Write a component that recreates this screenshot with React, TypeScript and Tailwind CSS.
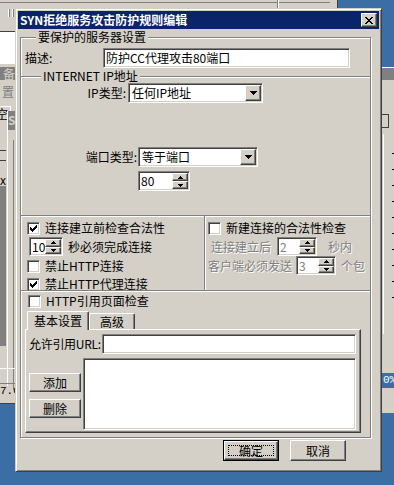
const sunken =
  'border border-t-[#808080] border-l-[#808080] border-b-white border-r-white shadow-[inset_1px_1px_0_#404040,inset_-1px_-1px_0_#d4d0c8] p-[1px]'
const raised =
  'border border-t-white border-l-white border-b-[#404040] border-r-[#404040] shadow-[inset_-1px_-1px_0_#808080,inset_1px_1px_0_#d4d0c8]'
const etchedTop = 'border-t border-[#808080] shadow-[inset_0_1px_0_#fff]'
const dim = 'text-[#808080] [text-shadow:1px_1px_0_#fff]'

const TICKS = [152, 168, 184, 200, 216, 232, 248, 264, 280, 296]

function CheckMark() {
  // classic 7x7 pixel tick
  const cols = [2, 3, 4, 3, 2, 1, 0]
  return (
    <svg width="7" height="7" viewBox="0 0 7 7" shapeRendering="crispEdges">
      {cols.map((y, x) => (
        <rect key={x} x={x} y={y} width="1" height="3" fill="#000" />
      ))}
    </svg>
  )
}

function Check({ on, label }: { on?: boolean; label: string }) {
  return (
    <div className="flex items-center">
      <div className={`${sunken} flex h-[13px] w-[13px] items-center justify-center bg-white p-0`}>
        {on && <CheckMark />}
      </div>
      <span className="ml-[5px]">{label}</span>
    </div>
  )
}

function Arrow({ up, w = 7 }: { up?: boolean; w?: number }) {
  const h = Math.ceil(w / 2)
  return (
    <svg width={w} height={h} viewBox={`0 0 ${w} ${h}`} shapeRendering="crispEdges">
      <polygon points={up ? `${w / 2},0 ${w},${h} 0,${h}` : `0,0 ${w},0 ${w / 2},${h}`} fill="#000" />
    </svg>
  )
}

function Spin({ value, className, disabled }: { value: string; className: string; disabled?: boolean }) {
  return (
    <div className={`${sunken} flex bg-white ${className}`}>
      <span className={`flex-1 pl-[1px] leading-[15px] ${disabled ? 'text-[#808080]' : ''}`}>{value}</span>
      <div className="flex w-[16px] flex-col">
        <div className={`${raised} flex flex-1 items-center justify-center bg-[#d4d0c8]`}>
          <Arrow up w={5} />
        </div>
        <div className={`${raised} flex flex-1 items-center justify-center bg-[#d4d0c8]`}>
          <Arrow w={5} />
        </div>
      </div>
    </div>
  )
}

function Select({ value, className }: { value: string; className: string }) {
  return (
    <div className={`${sunken} flex bg-white ${className}`}>
      <span className="flex-1 pl-[2px] leading-[16px]">{value}</span>
      <div className={`${raised} flex w-[16px] items-center justify-center bg-[#d4d0c8]`}>
        <Arrow />
      </div>
    </div>
  )
}

function Button({ label, className = '' }: { label: string; className?: string }) {
  return (
    <div className={`${raised} flex items-center justify-center bg-[#d4d0c8] ${className}`}>
      {label}
    </div>
  )
}

function Backdrop() {
  return (
    <>
      {/* window behind, left */}
      <div className="absolute left-0 top-0 h-[404px] w-[338px] border-r border-b border-[#404040] bg-[#d4d0c8]">
        <div className="absolute left-[8px] top-[9px] flex gap-[2px]">
          <div className="h-[8px] w-[2px] border-l border-white bg-[#808080]" />
          <div className="h-[8px] w-[2px] border-l border-white bg-[#808080]" />
        </div>
        <div className="absolute left-0 top-[2px] h-[1px] w-[330px] bg-[#808080]" />
        <div className="absolute left-[277px] top-0 h-[9px] w-[2px] border-l border-[#808080] bg-white" />
        <div className="absolute left-0 top-[31px] h-[33px] w-[16px] border-t border-[#404040] bg-white" />
        <div className="absolute left-0 top-[67px] h-[13px] w-[16px] bg-[#808080]" />
        <div className="absolute left-[3px] top-[67px] text-[12px] leading-[13px] text-[#d4d0c8]">备</div>
        <div className="absolute left-[2px] top-[86px] text-[12px] leading-none text-[#808080]">置</div>
        <div className="absolute left-0 top-[106px] h-[20px] w-[11px] border-t border-r border-white" />
        <div className="absolute left-[-4px] top-[108px] text-[12px] leading-none">空</div>
        <div className="absolute left-[7px] top-[111px] h-[275px] w-[9px] border-l border-white bg-[#d4d0c8]">
          <div className="h-[19px] bg-[#808080]" />
          <div className="ml-[5px] mt-[10px] h-[250px] w-[1px] bg-[#808080]" />
        </div>
        <div className="absolute left-[8px] top-[114px] text-[12px] font-bold leading-none text-[#d4d0c8]">S</div>
        <div className="absolute left-0 top-[150px] h-[1px] w-[6px] bg-[#404040]" />
        <div className="absolute left-0 top-[160px] h-[1px] w-[6px] bg-[#404040]" />
        <div className="absolute left-0 top-[174px] text-[12px] leading-none">x</div>
        <div className="absolute left-0 top-[186px] h-[160px] w-[6px] bg-[#808080]" />
        <div className="absolute left-0 top-[368px] h-[1px] w-[16px] bg-white" />
        <div className="absolute left-0 top-[383px] h-[1px] w-[16px] bg-[#808080]" />
        <div className="absolute left-0 top-[386px] font-['Liberation_Mono',monospace] text-[11px] leading-none">7.C</div>
      </div>
      {/* window behind, right */}
      <div className="absolute left-[382px] top-[67px] h-[346px] w-[40px] border-t border-white bg-[#d4d0c8]">
        <div className="h-[12px] bg-[#808080]" />
        <div className="absolute left-[-2px] top-[46px] h-[14px] w-[9px] border border-[#404040] bg-[#d4d0c8]" />
        <div className="absolute left-[1px] top-[66px] h-[200px] w-[1px] bg-white" />
        {TICKS.map((t) => (
          <div key={t} className="absolute left-[10px] h-[1px] w-[3px] bg-black" style={{ top: t - 67 }} />
        ))}
        <div className="absolute left-0 top-[305px] flex h-[15px] w-full items-center bg-[#3a6ea5] pl-[1px] font-['Liberation_Mono',monospace] text-[11px] leading-none text-white">
          0%
        </div>
      </div>
    </>
  )
}

export default function App() {
  return (
    <div className="relative h-[485px] w-[394px] overflow-hidden bg-[#3a6ea5] font-['Noto_Sans_CJK_SC',sans-serif] text-[12px] leading-[14px] text-black">
      <Backdrop />

      {/* dialog */}
      <div className="absolute left-[15px] top-[8px] h-[464px] w-[367px] border border-t-[#d4d0c8] border-l-[#d4d0c8] border-b-[#404040] border-r-[#404040] bg-[#d4d0c8] shadow-[inset_1px_1px_0_#fff,inset_-1px_-1px_0_#808080] p-[2px]">
        {/* title */}
        <div className="flex h-[18px] items-center bg-[#0a246a] pl-[2px] pr-[2px]">
          <span className="flex-1 font-bold text-white">SYN拒绝服务攻击防护规则编辑</span>
          <div className={`${raised} flex h-[14px] w-[16px] items-center justify-center bg-[#d4d0c8]`}>
            <svg width="8" height="7" viewBox="0 0 8 7" shapeRendering="crispEdges">
              <path d="M0 0h2v1h-2zM6 0h2v1h-2zM1 1h2v1h-2zM5 1h2v1h-2zM2 2h4v1h-4zM3 3h2v1h-2zM2 4h4v1h-4zM1 5h2v1h-2zM5 5h2v1h-2zM0 6h2v1h-2zM6 6h2v1h-2z" fill="#000" />
            </svg>
          </div>
        </div>

        {/* outer group */}
        <div className="relative ml-[2px] mt-[8px] flex h-[401px] w-[351px] flex-col border border-[#808080] shadow-[inset_1px_1px_0_#fff,1px_1px_0_#fff]">
          <span className="absolute left-[15px] top-[-8px] bg-[#d4d0c8] px-[2px]">要保护的服务器设置</span>

          {/* description */}
          <div className="flex h-[38px] items-start pt-[10px]">
            <span className="w-[82px] pl-[4px] leading-[20px]">描述:</span>
            <div className={`${sunken} h-[20px] w-[247px] bg-white pl-[2px] leading-[16px]`}>防护CC代理攻击80端口</div>
          </div>

          {/* internet ip */}
          <div className={`relative h-[139px] ${etchedTop}`}>
            <span className="absolute left-[20px] top-[-8px] bg-[#d4d0c8] px-[2px]">INTERNET IP地址</span>
            <div className="mt-[6px] flex items-center">
              <span className="w-[105px] text-right">IP类型:</span>
              <Select value="任何IP地址" className="ml-[2px] h-[20px] w-[135px]" />
            </div>
            <div className="mt-[44px] flex items-center">
              <span className="w-[116px] text-right">端口类型:</span>
              <Select value="等于端口" className="ml-[1px] h-[20px] w-[120px]" />
            </div>
            <Spin value="80" className="ml-[117px] mt-[4px] h-[20px] w-[52px]" />
          </div>

          {/* syn checks */}
          <div className={`flex h-[75px] ${etchedTop}`}>
            <div className="w-[183px] pl-[6px] pt-[5px]">
              <Check on label="连接建立前检查合法性" />
              <div className="mt-[2px] flex items-center">
                <Spin value="10" className="ml-[2px] h-[19px] w-[34px]" />
                <span className="ml-[5px]">秒必须完成连接</span>
              </div>
              <div className="mt-[3px]">
                <Check label="禁止HTTP连接" />
              </div>
              <div className="mt-[4px]">
                <Check on label="禁止HTTP代理连接" />
              </div>
            </div>
            <div className="flex-1 border-l border-[#808080] pl-[3px] pt-[5px] shadow-[inset_1px_0_0_#fff]">
              <Check label="新建连接的合法性检查" />
              <div className="mt-[2px] flex items-center">
                <span className={`ml-[3px] w-[66px] ${dim}`}>连接建立后</span>
                <Spin value="2" disabled className="h-[19px] w-[40px]" />
                <span className={`ml-[11px] ${dim}`}>秒内</span>
              </div>
              <div className="flex items-center">
                <span className={`w-[88px] ${dim}`}>客户端必须发送</span>
                <Spin value="3" disabled className="h-[19px] w-[40px]" />
                <span className={`ml-[5px] ${dim}`}>个包</span>
              </div>
            </div>
          </div>

          {/* http referer */}
          <div className={`flex-1 ${etchedTop}`}>
            <div className="mt-[3px] pl-[7px]">
              <Check label="HTTP引用页面检查" />
            </div>
            <div className="mt-[3px] flex items-end pl-[6px]">
              <div className="relative z-10 -mb-[1px] flex h-[19px] w-[62px] items-center justify-center rounded-t-[2px] border border-b-0 border-t-white border-l-white border-r-[#404040] bg-[#d4d0c8] shadow-[inset_-1px_0_0_#808080]">
                基本设置
              </div>
              <div className="flex h-[16px] w-[46px] items-center justify-center rounded-t-[2px] border border-b-0 border-t-white border-l-white border-r-[#404040] bg-[#d4d0c8] shadow-[inset_-1px_0_0_#808080]">
                高级
              </div>
            </div>
            <div className={`${raised} ml-[4px] h-[104px] w-[336px] bg-[#d4d0c8] pl-[3px] pt-[4px]`}>
              <div className="flex items-center">
                <span className="w-[73px] whitespace-nowrap tracking-[-0.3px]">允许引用URL:</span>
                <div className={`${sunken} h-[20px] w-[254px] bg-white`} />
              </div>
              <div className="mt-[4px] flex">
                <div className="w-[54px] pt-[15px]">
                  <Button label="添加" className="h-[19px] w-[52px]" />
                  <Button label="删除" className="mt-[7px] h-[19px] w-[52px]" />
                </div>
                <div className={`${sunken} h-[72px] w-[273px] bg-white`} />
              </div>
            </div>
          </div>
        </div>

        {/* dialog buttons */}
        <div className="mt-[2px] flex pl-[205px]">
          <div className="h-[21px] w-[56px] border border-black">
            <div className={`${raised} flex h-full w-full items-center justify-center bg-[#d4d0c8] p-[3px]`}>
              <div className="flex h-full w-full items-center justify-center border border-dotted border-black">确定</div>
            </div>
          </div>
          <Button label="取消" className="ml-[11px] h-[21px] w-[56px]" />
        </div>
      </div>
    </div>
  )
}
